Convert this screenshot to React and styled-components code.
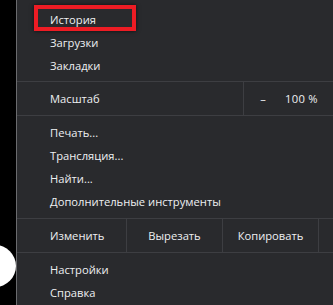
import React from "react";
import styled, { createGlobalStyle } from "styled-components";

const GlobalStyle = createGlobalStyle`
  html, body { margin: 0; padding: 0; background: #000; }
  body { font-family: "Open Sans", "Noto Sans", sans-serif; }
`;

const Page = styled.div`
  display: flex;
  width: 333px;
  height: 305px;
  overflow: hidden;
  background: #000;
`;

const Strip = styled.div`
  flex: 0 0 16px;
  height: 100%;
  background: #000;
  border-right: 1px solid #6a6b6e;
  overflow: hidden;
  svg { display: block; }
`;

const Menu = styled.div`
  flex: 0 0 316px;
  background: #292a2d;
  color: #eef0f2;
  font-size: 11.2px;
  white-space: nowrap;
  overflow: hidden;
`;

const Section = styled.div`
  padding-top: ${(p) => p.$pt || 0}px;
  padding-bottom: ${(p) => p.$pb || 0}px;
`;

const Item = styled.div`
  position: relative;
  height: 23px;
  display: flex;
  align-items: center;
  padding-left: 33px;
`;

const Highlight = styled.div`
  position: absolute;
  left: 17px;
  top: -3px;
  width: 102px;
  height: 26px;
  box-sizing: border-box;
  border: 4px solid #ed1c24;
  box-shadow: 0 0 4px rgba(0, 0, 0, 0.7);
  pointer-events: none;
`;

const Row = styled.div`
  display: flex;
  height: 33px;
  border-top: 1px solid #3d3e42;
  border-bottom: 1px solid #3d3e42;
`;

const RowLabel = styled.div`
  flex: 0 0 ${(p) => p.$w}px;
  box-sizing: border-box;
  padding-left: 33px;
  display: flex;
  align-items: center;
`;

const Controls = styled.div`
  display: flex;
  flex: 1;
  border-left: 1px solid #3d3e42;
`;

const ZoomButton = styled.div`
  flex: 0 0 38px;
  display: flex;
  align-items: center;
  justify-content: center;
`;

const ZoomValue = styled.div`
  flex: 0 0 auto;
  padding-left: 3px;
  display: flex;
  align-items: center;
  letter-spacing: 0.3px;
`;

const EditButton = styled.div`
  flex: 0 0 95px;
  display: flex;
  align-items: center;
  justify-content: center;
  border-left: 1px solid #3d3e42;
`;

export default function App() {
  return (
    <>
      <GlobalStyle />
      <Page>
        <Strip>
          <svg width="16" height="305" viewBox="0 0 16 305">
            <circle cx="-5" cy="266" r="21" fill="#fff" />
          </svg>
        </Strip>
        <Menu>
          <Section $pt={8} $pb={4}>
            <Item>
              История
              <Highlight />
            </Item>
            <Item>Загрузки</Item>
            <Item>Закладки</Item>
          </Section>
          <Row>
            <RowLabel $w={226}>Масштаб</RowLabel>
            <Controls>
              <ZoomButton>–</ZoomButton>
              <ZoomValue>100 %</ZoomValue>
            </Controls>
          </Row>
          <Section $pt={5} $pb={5}>
            <Item>Печать...</Item>
            <Item>Трансляция...</Item>
            <Item>Найти...</Item>
            <Item>Дополнительные инструменты</Item>
          </Section>
          <Row>
            <RowLabel $w={109}>Изменить</RowLabel>
            <EditButton>Вырезать</EditButton>
            <EditButton>Копировать</EditButton>
            <EditButton />
          </Row>
          <Section $pt={5} $pb={5}>
            <Item>Настройки</Item>
            <Item>Справка</Item>
          </Section>
        </Menu>
      </Page>
    </>
  );
}
